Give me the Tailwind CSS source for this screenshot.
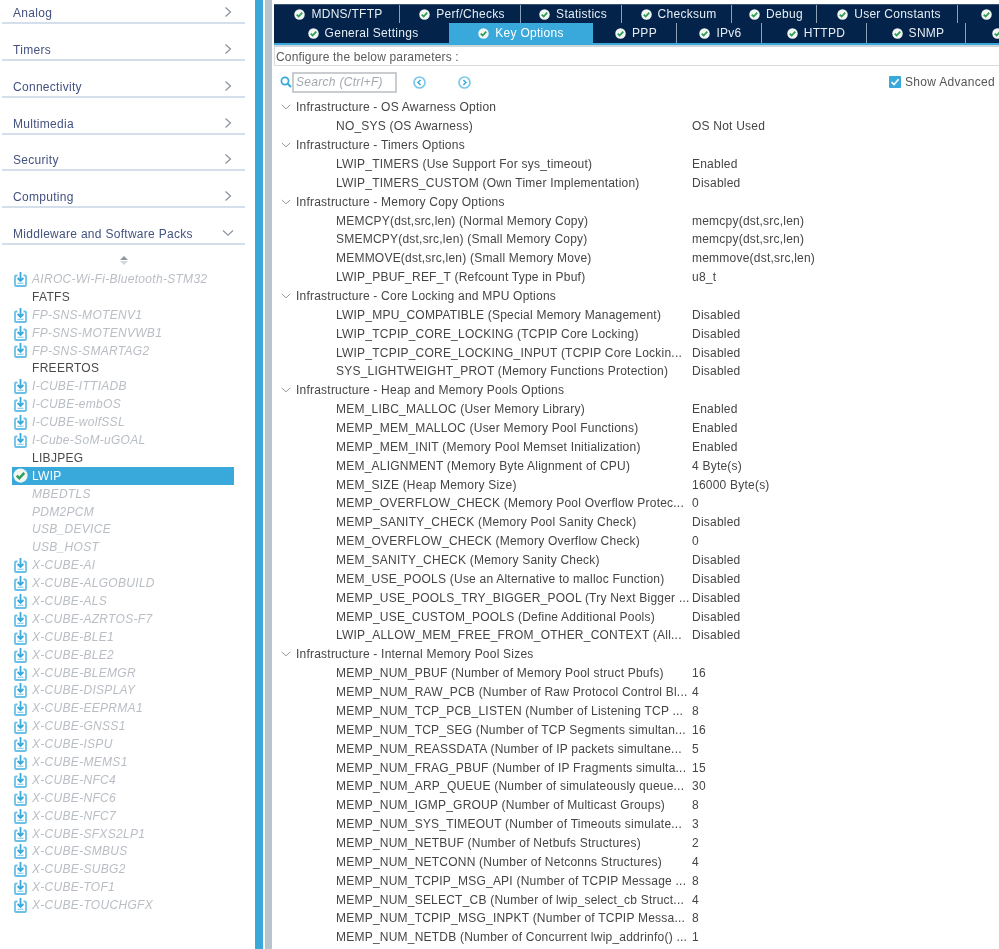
<!DOCTYPE html>
<html lang="en">
<head>
<meta charset="UTF-8">
<title>LWIP Key Options</title>
<script src="https://cdn.jsdelivr.net/npm/@tailwindcss/browser@4"></script>
</head>
<body class="bg-white">
<svg class="hidden">
  <symbol id="dl" viewBox="0 0 13 16"><path d="M3.5 4.5H2Q1 4.5 1 5.5V14Q1 15 2 15H11Q12 15 12 14V5.5Q12 4.5 11 4.5H9.5" fill="none" stroke="#6cc0e6" stroke-width="1.8"/><path d="M6.5 1V9.5M3.6 7L6.5 10L9.4 7" fill="none" stroke="#39a9dc" stroke-width="1.8"/><path d="M3.5 12.3H9.5" stroke="#8fd0ee" stroke-width="1.3"/></symbol>
  <symbol id="ok" viewBox="0 0 12 12"><circle cx="6" cy="6" r="5.7" fill="#f1f6f2"/><path d="M3 6.1L5.1 8.2L9 3.9" fill="none" stroke="#2f9e57" stroke-width="2"/></symbol>
  <symbol id="right" viewBox="0 0 8 12"><path d="M1.5 1.5L6.5 6L1.5 10.5" fill="none" stroke="#8a929c" stroke-width="1.2"/></symbol>
  <symbol id="down" viewBox="0 0 12 8"><path d="M1 1.5L6 6.2L11 1.5" fill="none" stroke="#8a929c" stroke-width="1.1"/></symbol>
</svg>

<div class="flex h-[949px] w-[999px] overflow-hidden font-['Liberation_Sans',Arial,sans-serif] text-[12px] blur-[0.3px]">

  <!-- left menu -->
  <aside class="w-[255px] shrink-0 pl-[2px] pr-[10px]">
    <div class="-mt-[12.6px] tracking-[0.29px] text-[#43527f]">
      <div class="flex h-[36.8px] items-end justify-between border-b-2 border-[#d5deeb] pl-[11px] pr-[13px]"><span>Analog</span><svg class="mb-[4px] h-[12px] w-[8px]"><use href="#right"/></svg></div>
      <div class="flex h-[36.8px] items-end justify-between border-b-2 border-[#d5deeb] pl-[11px] pr-[13px]"><span>Timers</span><svg class="mb-[4px] h-[12px] w-[8px]"><use href="#right"/></svg></div>
      <div class="flex h-[36.8px] items-end justify-between border-b-2 border-[#d5deeb] pl-[11px] pr-[13px]"><span>Connectivity</span><svg class="mb-[4px] h-[12px] w-[8px]"><use href="#right"/></svg></div>
      <div class="flex h-[36.8px] items-end justify-between border-b-2 border-[#d5deeb] pl-[11px] pr-[13px]"><span>Multimedia</span><svg class="mb-[4px] h-[12px] w-[8px]"><use href="#right"/></svg></div>
      <div class="flex h-[36.8px] items-end justify-between border-b-2 border-[#d5deeb] pl-[11px] pr-[13px]"><span>Security</span><svg class="mb-[4px] h-[12px] w-[8px]"><use href="#right"/></svg></div>
      <div class="flex h-[36.8px] items-end justify-between border-b-2 border-[#d5deeb] pl-[11px] pr-[13px]"><span>Computing</span><svg class="mb-[4px] h-[12px] w-[8px]"><use href="#right"/></svg></div>
      <div class="flex h-[36.8px] items-end justify-between border-b-2 border-[#d5deeb] pl-[11px] pr-[11px]"><span>Middleware and Software Packs</span><svg class="mb-[6px] h-[8px] w-[12px]"><use href="#down"/></svg></div>
    </div>
    <div class="mt-[11px] flex justify-center"><div class="flex flex-col gap-[1px]"><div class="h-0 w-0 border-x-[4px] border-b-[4px] border-x-transparent border-b-[#8f979e]"></div><div class="h-0 w-0 border-x-[4px] border-t-[4px] border-x-transparent border-t-[#d4d8dc]"></div></div></div>
    <div class="mr-[11px] mt-[5px] pl-[10px] tracking-[0.3px]">
      <div class="flex h-[17.9px] items-center italic text-[#b9bec4]"><svg class="ml-[2px] mr-[5px] h-[16px] w-[13px]"><use href="#dl"/></svg>AIROC-Wi-Fi-Bluetooth-STM32</div>
      <div class="flex h-[17.9px] items-center pl-[20px] text-[#4a4a4a]">FATFS</div>
      <div class="flex h-[17.9px] items-center italic text-[#b9bec4]"><svg class="ml-[2px] mr-[5px] h-[16px] w-[13px]"><use href="#dl"/></svg>FP-SNS-MOTENV1</div>
      <div class="flex h-[17.9px] items-center italic text-[#b9bec4]"><svg class="ml-[2px] mr-[5px] h-[16px] w-[13px]"><use href="#dl"/></svg>FP-SNS-MOTENVWB1</div>
      <div class="flex h-[17.9px] items-center italic text-[#b9bec4]"><svg class="ml-[2px] mr-[5px] h-[16px] w-[13px]"><use href="#dl"/></svg>FP-SNS-SMARTAG2</div>
      <div class="flex h-[17.9px] items-center pl-[20px] text-[#4a4a4a]">FREERTOS</div>
      <div class="flex h-[17.9px] items-center italic text-[#b9bec4]"><svg class="ml-[2px] mr-[5px] h-[16px] w-[13px]"><use href="#dl"/></svg>I-CUBE-ITTIADB</div>
      <div class="flex h-[17.9px] items-center italic text-[#b9bec4]"><svg class="ml-[2px] mr-[5px] h-[16px] w-[13px]"><use href="#dl"/></svg>I-CUBE-embOS</div>
      <div class="flex h-[17.9px] items-center italic text-[#b9bec4]"><svg class="ml-[2px] mr-[5px] h-[16px] w-[13px]"><use href="#dl"/></svg>I-CUBE-wolfSSL</div>
      <div class="flex h-[17.9px] items-center italic text-[#b9bec4]"><svg class="ml-[2px] mr-[5px] h-[16px] w-[13px]"><use href="#dl"/></svg>I-Cube-SoM-uGOAL</div>
      <div class="flex h-[17.9px] items-center pl-[20px] text-[#4a4a4a]">LIBJPEG</div>
      <div class="flex h-[17.9px] items-center bg-[#39a9dc] text-white"><svg class="ml-[1px] mr-[4px] h-[15px] w-[15px]"><use href="#ok"/></svg>LWIP</div>
      <div class="flex h-[17.9px] items-center pl-[20px] italic text-[#b9bec4]">MBEDTLS</div>
      <div class="flex h-[17.9px] items-center pl-[20px] italic text-[#b9bec4]">PDM2PCM</div>
      <div class="flex h-[17.9px] items-center pl-[20px] italic text-[#b9bec4]">USB_DEVICE</div>
      <div class="flex h-[17.9px] items-center pl-[20px] italic text-[#b9bec4]">USB_HOST</div>
      <div class="flex h-[17.9px] items-center italic text-[#b9bec4]"><svg class="ml-[2px] mr-[5px] h-[16px] w-[13px]"><use href="#dl"/></svg>X-CUBE-AI</div>
      <div class="flex h-[17.9px] items-center italic text-[#b9bec4]"><svg class="ml-[2px] mr-[5px] h-[16px] w-[13px]"><use href="#dl"/></svg>X-CUBE-ALGOBUILD</div>
      <div class="flex h-[17.9px] items-center italic text-[#b9bec4]"><svg class="ml-[2px] mr-[5px] h-[16px] w-[13px]"><use href="#dl"/></svg>X-CUBE-ALS</div>
      <div class="flex h-[17.9px] items-center italic text-[#b9bec4]"><svg class="ml-[2px] mr-[5px] h-[16px] w-[13px]"><use href="#dl"/></svg>X-CUBE-AZRTOS-F7</div>
      <div class="flex h-[17.9px] items-center italic text-[#b9bec4]"><svg class="ml-[2px] mr-[5px] h-[16px] w-[13px]"><use href="#dl"/></svg>X-CUBE-BLE1</div>
      <div class="flex h-[17.9px] items-center italic text-[#b9bec4]"><svg class="ml-[2px] mr-[5px] h-[16px] w-[13px]"><use href="#dl"/></svg>X-CUBE-BLE2</div>
      <div class="flex h-[17.9px] items-center italic text-[#b9bec4]"><svg class="ml-[2px] mr-[5px] h-[16px] w-[13px]"><use href="#dl"/></svg>X-CUBE-BLEMGR</div>
      <div class="flex h-[17.9px] items-center italic text-[#b9bec4]"><svg class="ml-[2px] mr-[5px] h-[16px] w-[13px]"><use href="#dl"/></svg>X-CUBE-DISPLAY</div>
      <div class="flex h-[17.9px] items-center italic text-[#b9bec4]"><svg class="ml-[2px] mr-[5px] h-[16px] w-[13px]"><use href="#dl"/></svg>X-CUBE-EEPRMA1</div>
      <div class="flex h-[17.9px] items-center italic text-[#b9bec4]"><svg class="ml-[2px] mr-[5px] h-[16px] w-[13px]"><use href="#dl"/></svg>X-CUBE-GNSS1</div>
      <div class="flex h-[17.9px] items-center italic text-[#b9bec4]"><svg class="ml-[2px] mr-[5px] h-[16px] w-[13px]"><use href="#dl"/></svg>X-CUBE-ISPU</div>
      <div class="flex h-[17.9px] items-center italic text-[#b9bec4]"><svg class="ml-[2px] mr-[5px] h-[16px] w-[13px]"><use href="#dl"/></svg>X-CUBE-MEMS1</div>
      <div class="flex h-[17.9px] items-center italic text-[#b9bec4]"><svg class="ml-[2px] mr-[5px] h-[16px] w-[13px]"><use href="#dl"/></svg>X-CUBE-NFC4</div>
      <div class="flex h-[17.9px] items-center italic text-[#b9bec4]"><svg class="ml-[2px] mr-[5px] h-[16px] w-[13px]"><use href="#dl"/></svg>X-CUBE-NFC6</div>
      <div class="flex h-[17.9px] items-center italic text-[#b9bec4]"><svg class="ml-[2px] mr-[5px] h-[16px] w-[13px]"><use href="#dl"/></svg>X-CUBE-NFC7</div>
      <div class="flex h-[17.9px] items-center italic text-[#b9bec4]"><svg class="ml-[2px] mr-[5px] h-[16px] w-[13px]"><use href="#dl"/></svg>X-CUBE-SFXS2LP1</div>
      <div class="flex h-[17.9px] items-center italic text-[#b9bec4]"><svg class="ml-[2px] mr-[5px] h-[16px] w-[13px]"><use href="#dl"/></svg>X-CUBE-SMBUS</div>
      <div class="flex h-[17.9px] items-center italic text-[#b9bec4]"><svg class="ml-[2px] mr-[5px] h-[16px] w-[13px]"><use href="#dl"/></svg>X-CUBE-SUBG2</div>
      <div class="flex h-[17.9px] items-center italic text-[#b9bec4]"><svg class="ml-[2px] mr-[5px] h-[16px] w-[13px]"><use href="#dl"/></svg>X-CUBE-TOF1</div>
      <div class="flex h-[17.9px] items-center italic text-[#b9bec4]"><svg class="ml-[2px] mr-[5px] h-[16px] w-[13px]"><use href="#dl"/></svg>X-CUBE-TOUCHGFX</div>
    </div>
  </aside>

  <!-- splitter -->
  <div class="w-[8px] shrink-0 bg-[#39a9dc]"></div>
  <div class="ml-[2px] mr-[2px] w-[7px] shrink-0 bg-[#b8c4cb]"></div>

  <!-- right panel -->
  <main class="min-w-0 flex-1">
    <div class="pt-[4px] tracking-[0.28px] text-[#e6edf2]">
      <div class="flex h-[19px] w-[740px] border-t border-[#3a5373] bg-[#03234b]">
        <div class="flex w-[126px] shrink-0 items-center justify-center gap-[6px] border-r border-[#8da0b5] pl-[4px]"><svg class="h-[11px] w-[11px]"><use href="#ok"/></svg>MDNS/TFTP</div>
        <div class="flex w-[121px] shrink-0 items-center justify-center gap-[6px] border-r border-[#8da0b5] pl-[4px]"><svg class="h-[11px] w-[11px]"><use href="#ok"/></svg>Perf/Checks</div>
        <div class="flex w-[101px] shrink-0 items-center justify-center gap-[6px] border-r border-[#8da0b5] pl-[4px]"><svg class="h-[11px] w-[11px]"><use href="#ok"/></svg>Statistics</div>
        <div class="flex w-[110px] shrink-0 items-center justify-center gap-[6px] border-r border-[#8da0b5] pl-[4px]"><svg class="h-[11px] w-[11px]"><use href="#ok"/></svg>Checksum</div>
        <div class="flex w-[85px] shrink-0 items-center justify-center gap-[6px] border-r border-[#8da0b5] pl-[4px]"><svg class="h-[11px] w-[11px]"><use href="#ok"/></svg>Debug</div>
        <div class="flex w-[141px] shrink-0 items-center justify-center gap-[6px] border-r border-[#8da0b5] pl-[4px]"><svg class="h-[11px] w-[11px]"><use href="#ok"/></svg>User Constants</div>
        <div class="flex w-[56px] shrink-0 items-center pl-[23px]"><svg class="h-[11px] w-[11px] shrink-0"><use href="#ok"/></svg></div>
      </div>
      <div class="flex h-[20px] w-[740px] bg-[#03234b]">
        <div class="flex w-[175px] shrink-0 items-center justify-center gap-[6px] pl-[3px]"><svg class="h-[11px] w-[11px]"><use href="#ok"/></svg>General Settings</div>
        <div class="flex w-[144px] shrink-0 items-center justify-center gap-[6px] bg-[#39a9dc] text-white"><svg class="h-[11px] w-[11px]"><use href="#ok"/></svg>Key Options</div>
        <div class="flex w-[84px] shrink-0 items-center justify-center gap-[6px] border-r border-[#8da0b5] pl-[3px]"><svg class="h-[11px] w-[11px]"><use href="#ok"/></svg>PPP</div>
        <div class="flex w-[85px] shrink-0 items-center justify-center gap-[6px] border-r border-[#8da0b5] pl-[3px]"><svg class="h-[11px] w-[11px]"><use href="#ok"/></svg>IPv6</div>
        <div class="flex w-[105px] shrink-0 items-center justify-center gap-[6px] border-r border-[#8da0b5] pl-[4px]"><svg class="h-[11px] w-[11px]"><use href="#ok"/></svg>HTTPD</div>
        <div class="flex w-[99px] shrink-0 items-center justify-center gap-[6px] border-r border-[#8da0b5] pl-[4px]"><svg class="h-[11px] w-[11px]"><use href="#ok"/></svg>SNMP</div>
        <div class="flex w-[48px] shrink-0 items-center pl-[26px]"><svg class="h-[11px] w-[11px] shrink-0"><use href="#ok"/></svg></div>
      </div>
    </div>
    <div class="h-[2px] bg-[#39a9dc]"></div>
    <div class="h-[2px] bg-[#d0d5d9]"></div>
    <div class="flex h-[19px] items-center border-b border-l border-[#d8dcdf] pl-[1px] pt-[1px] tracking-[0.17px] text-[#5a5a5a]">Configure the below parameters :</div>

    <div class="mt-[5px] flex h-[22px] items-center pl-[6px]">
      <svg class="h-[12px] w-[12px] shrink-0" viewBox="0 0 12 12"><circle cx="5" cy="5" r="3.6" fill="none" stroke="#39a9dc" stroke-width="1.7"/><path d="M7.7 7.7L11 11" stroke="#39a9dc" stroke-width="2"/></svg>
      <div class="flex h-[21px] w-[105px] shrink-0 items-center whitespace-nowrap border-2 border-[#c9cdd0] pl-[2px] italic tracking-[0.3px] text-[#a4a8ac]">Search (Ctrl+F)</div>
      <svg class="ml-[16px] h-[13px] w-[13px] shrink-0" viewBox="0 0 13 13"><circle cx="6.5" cy="6.5" r="5.5" fill="none" stroke="#7cc8ea" stroke-width="1.7"/><path d="M7.6 4L5 6.5L7.6 9" fill="none" stroke="#39a9dc" stroke-width="1.5"/></svg>
      <svg class="ml-[32px] h-[13px] w-[13px] shrink-0" viewBox="0 0 13 13"><circle cx="6.5" cy="6.5" r="5.5" fill="none" stroke="#7cc8ea" stroke-width="1.7"/><path d="M5.4 4L8 6.5L5.4 9" fill="none" stroke="#39a9dc" stroke-width="1.5"/></svg>
      <span class="ml-[418px] h-[12px] w-[12px] shrink-0 rounded-[1px] bg-[#39a9dc]"><svg class="h-[12px] w-[12px]" viewBox="0 0 12 12"><path d="M2.5 6L5 8.6L9.6 3.2" fill="none" stroke="#fff" stroke-width="1.6"/></svg></span>
      <span class="ml-[4px] shrink-0 whitespace-nowrap tracking-[0.3px] text-[#555]">Show Advanced Parameters</span>
    </div>

    <div class="mt-[5px] tracking-[0.22px] text-[#454545]">
      <div class="flex h-[18.86px] items-center pl-[7px]"><svg class="mr-[5px] h-[8px] w-[10px]"><use href="#down"/></svg>Infrastructure - OS Awarness Option</div>
      <div class="flex h-[18.86px] items-center pl-[62px]"><span class="w-[356px] shrink-0 whitespace-nowrap">NO_SYS (OS Awarness)</span><span>OS Not Used</span></div>
      <div class="flex h-[18.86px] items-center pl-[7px]"><svg class="mr-[5px] h-[8px] w-[10px]"><use href="#down"/></svg>Infrastructure - Timers Options</div>
      <div class="flex h-[18.86px] items-center pl-[62px]"><span class="w-[356px] shrink-0 whitespace-nowrap">LWIP_TIMERS (Use Support For sys_timeout)</span><span>Enabled</span></div>
      <div class="flex h-[18.86px] items-center pl-[62px]"><span class="w-[356px] shrink-0 whitespace-nowrap">LWIP_TIMERS_CUSTOM (Own Timer Implementation)</span><span>Disabled</span></div>
      <div class="flex h-[18.86px] items-center pl-[7px]"><svg class="mr-[5px] h-[8px] w-[10px]"><use href="#down"/></svg>Infrastructure - Memory Copy Options</div>
      <div class="flex h-[18.86px] items-center pl-[62px]"><span class="w-[356px] shrink-0 whitespace-nowrap">MEMCPY(dst,src,len) (Normal Memory Copy)</span><span>memcpy(dst,src,len)</span></div>
      <div class="flex h-[18.86px] items-center pl-[62px]"><span class="w-[356px] shrink-0 whitespace-nowrap">SMEMCPY(dst,src,len) (Small Memory Copy)</span><span>memcpy(dst,src,len)</span></div>
      <div class="flex h-[18.86px] items-center pl-[62px]"><span class="w-[356px] shrink-0 whitespace-nowrap">MEMMOVE(dst,src,len) (Small Memory Move)</span><span>memmove(dst,src,len)</span></div>
      <div class="flex h-[18.86px] items-center pl-[62px]"><span class="w-[356px] shrink-0 whitespace-nowrap">LWIP_PBUF_REF_T (Refcount Type in Pbuf)</span><span>u8_t</span></div>
      <div class="flex h-[18.86px] items-center pl-[7px]"><svg class="mr-[5px] h-[8px] w-[10px]"><use href="#down"/></svg>Infrastructure - Core Locking and MPU Options</div>
      <div class="flex h-[18.86px] items-center pl-[62px]"><span class="w-[356px] shrink-0 whitespace-nowrap">LWIP_MPU_COMPATIBLE (Special Memory Management)</span><span>Disabled</span></div>
      <div class="flex h-[18.86px] items-center pl-[62px]"><span class="w-[356px] shrink-0 whitespace-nowrap">LWIP_TCPIP_CORE_LOCKING (TCPIP Core Locking)</span><span>Disabled</span></div>
      <div class="flex h-[18.86px] items-center pl-[62px]"><span class="w-[356px] shrink-0 whitespace-nowrap">LWIP_TCPIP_CORE_LOCKING_INPUT (TCPIP Core Lockin...</span><span>Disabled</span></div>
      <div class="flex h-[18.86px] items-center pl-[62px]"><span class="w-[356px] shrink-0 whitespace-nowrap">SYS_LIGHTWEIGHT_PROT (Memory Functions Protection)</span><span>Disabled</span></div>
      <div class="flex h-[18.86px] items-center pl-[7px]"><svg class="mr-[5px] h-[8px] w-[10px]"><use href="#down"/></svg>Infrastructure - Heap and Memory Pools Options</div>
      <div class="flex h-[18.86px] items-center pl-[62px]"><span class="w-[356px] shrink-0 whitespace-nowrap">MEM_LIBC_MALLOC (User Memory Library)</span><span>Enabled</span></div>
      <div class="flex h-[18.86px] items-center pl-[62px]"><span class="w-[356px] shrink-0 whitespace-nowrap">MEMP_MEM_MALLOC (User Memory Pool Functions)</span><span>Enabled</span></div>
      <div class="flex h-[18.86px] items-center pl-[62px]"><span class="w-[356px] shrink-0 whitespace-nowrap">MEMP_MEM_INIT (Memory Pool Memset Initialization)</span><span>Enabled</span></div>
      <div class="flex h-[18.86px] items-center pl-[62px]"><span class="w-[356px] shrink-0 whitespace-nowrap">MEM_ALIGNMENT (Memory Byte Alignment of CPU)</span><span>4 Byte(s)</span></div>
      <div class="flex h-[18.86px] items-center pl-[62px]"><span class="w-[356px] shrink-0 whitespace-nowrap">MEM_SIZE (Heap Memory Size)</span><span>16000 Byte(s)</span></div>
      <div class="flex h-[18.86px] items-center pl-[62px]"><span class="w-[356px] shrink-0 whitespace-nowrap">MEMP_OVERFLOW_CHECK (Memory Pool Overflow Protec...</span><span>0</span></div>
      <div class="flex h-[18.86px] items-center pl-[62px]"><span class="w-[356px] shrink-0 whitespace-nowrap">MEMP_SANITY_CHECK (Memory Pool Sanity Check)</span><span>Disabled</span></div>
      <div class="flex h-[18.86px] items-center pl-[62px]"><span class="w-[356px] shrink-0 whitespace-nowrap">MEM_OVERFLOW_CHECK (Memory Overflow Check)</span><span>0</span></div>
      <div class="flex h-[18.86px] items-center pl-[62px]"><span class="w-[356px] shrink-0 whitespace-nowrap">MEM_SANITY_CHECK (Memory Sanity Check)</span><span>Disabled</span></div>
      <div class="flex h-[18.86px] items-center pl-[62px]"><span class="w-[356px] shrink-0 whitespace-nowrap">MEM_USE_POOLS (Use an Alternative to malloc Function)</span><span>Disabled</span></div>
      <div class="flex h-[18.86px] items-center pl-[62px]"><span class="w-[356px] shrink-0 whitespace-nowrap">MEMP_USE_POOLS_TRY_BIGGER_POOL (Try Next Bigger ...</span><span>Disabled</span></div>
      <div class="flex h-[18.86px] items-center pl-[62px]"><span class="w-[356px] shrink-0 whitespace-nowrap">MEMP_USE_CUSTOM_POOLS (Define Additional Pools)</span><span>Disabled</span></div>
      <div class="flex h-[18.86px] items-center pl-[62px]"><span class="w-[356px] shrink-0 whitespace-nowrap">LWIP_ALLOW_MEM_FREE_FROM_OTHER_CONTEXT (All...</span><span>Disabled</span></div>
      <div class="flex h-[18.86px] items-center pl-[7px]"><svg class="mr-[5px] h-[8px] w-[10px]"><use href="#down"/></svg>Infrastructure - Internal Memory Pool Sizes</div>
      <div class="flex h-[18.86px] items-center pl-[62px]"><span class="w-[356px] shrink-0 whitespace-nowrap">MEMP_NUM_PBUF (Number of Memory Pool struct Pbufs)</span><span>16</span></div>
      <div class="flex h-[18.86px] items-center pl-[62px]"><span class="w-[356px] shrink-0 whitespace-nowrap">MEMP_NUM_RAW_PCB (Number of Raw Protocol Control Bl...</span><span>4</span></div>
      <div class="flex h-[18.86px] items-center pl-[62px]"><span class="w-[356px] shrink-0 whitespace-nowrap">MEMP_NUM_TCP_PCB_LISTEN (Number of Listening TCP ...</span><span>8</span></div>
      <div class="flex h-[18.86px] items-center pl-[62px]"><span class="w-[356px] shrink-0 whitespace-nowrap">MEMP_NUM_TCP_SEG (Number of TCP Segments simultan...</span><span>16</span></div>
      <div class="flex h-[18.86px] items-center pl-[62px]"><span class="w-[356px] shrink-0 whitespace-nowrap">MEMP_NUM_REASSDATA (Number of IP packets simultane...</span><span>5</span></div>
      <div class="flex h-[18.86px] items-center pl-[62px]"><span class="w-[356px] shrink-0 whitespace-nowrap">MEMP_NUM_FRAG_PBUF (Number of IP Fragments simulta...</span><span>15</span></div>
      <div class="flex h-[18.86px] items-center pl-[62px]"><span class="w-[356px] shrink-0 whitespace-nowrap">MEMP_NUM_ARP_QUEUE (Number of simulateously queue...</span><span>30</span></div>
      <div class="flex h-[18.86px] items-center pl-[62px]"><span class="w-[356px] shrink-0 whitespace-nowrap">MEMP_NUM_IGMP_GROUP (Number of Multicast Groups)</span><span>8</span></div>
      <div class="flex h-[18.86px] items-center pl-[62px]"><span class="w-[356px] shrink-0 whitespace-nowrap">MEMP_NUM_SYS_TIMEOUT (Number of Timeouts simulate...</span><span>3</span></div>
      <div class="flex h-[18.86px] items-center pl-[62px]"><span class="w-[356px] shrink-0 whitespace-nowrap">MEMP_NUM_NETBUF (Number of Netbufs Structures)</span><span>2</span></div>
      <div class="flex h-[18.86px] items-center pl-[62px]"><span class="w-[356px] shrink-0 whitespace-nowrap">MEMP_NUM_NETCONN (Number of Netconns Structures)</span><span>4</span></div>
      <div class="flex h-[18.86px] items-center pl-[62px]"><span class="w-[356px] shrink-0 whitespace-nowrap">MEMP_NUM_TCPIP_MSG_API (Number of TCPIP Message ...</span><span>8</span></div>
      <div class="flex h-[18.86px] items-center pl-[62px]"><span class="w-[356px] shrink-0 whitespace-nowrap">MEMP_NUM_SELECT_CB (Number of lwip_select_cb Struct...</span><span>4</span></div>
      <div class="flex h-[18.86px] items-center pl-[62px]"><span class="w-[356px] shrink-0 whitespace-nowrap">MEMP_NUM_TCPIP_MSG_INPKT (Number of TCPIP Messa...</span><span>8</span></div>
      <div class="flex h-[18.86px] items-center pl-[62px]"><span class="w-[356px] shrink-0 whitespace-nowrap">MEMP_NUM_NETDB (Number of Concurrent lwip_addrinfo() ...</span><span>1</span></div>
    </div>
  </main>
</div>
</body>
</html>
